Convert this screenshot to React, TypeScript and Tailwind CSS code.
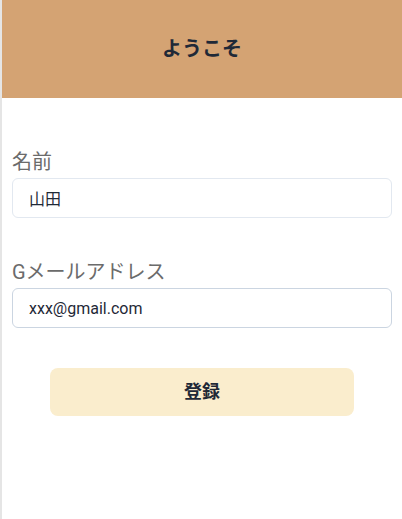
import React from "react";

export default function App() {
  return (
    <div
      className="min-h-[519px] border-l-2 border-[#e5e5e5] bg-white"
      style={{ fontFamily: 'Roboto, "Noto Sans CJK JP", sans-serif' }}
    >
      <header className="h-[98px] bg-[#d4a373] flex items-center justify-center">
        <h1 className="text-xl font-bold text-[#1f2937]">ようこそ</h1>
      </header>
      <form className="px-[10px] pt-[50px]">
        <div>
          <label className="block text-xl leading-7 text-[#6b6b6b] mb-0.5">名前</label>
          <input
            className="w-full h-10 rounded-md border border-[#e2e8f0] px-4 text-base text-[#1f2937] outline-none"
            defaultValue="山田"
          />
        </div>
        <div className="mt-10">
          <label className="block text-xl leading-7 text-[#6b6b6b] mb-0.5">Gメールアドレス</label>
          <input
            className="w-full h-10 rounded-md border border-[#cbd5e1] px-4 text-base text-[#1f2937] outline-none"
            defaultValue="xxx@gmail.com"
          />
        </div>
        <div className="mt-10 flex justify-center">
          <button
            type="button"
            className="w-4/5 h-12 rounded-lg bg-[#faedcd] text-lg font-bold text-[#1f2937]"
          >
            登録
          </button>
        </div>
      </form>
    </div>
  );
}
